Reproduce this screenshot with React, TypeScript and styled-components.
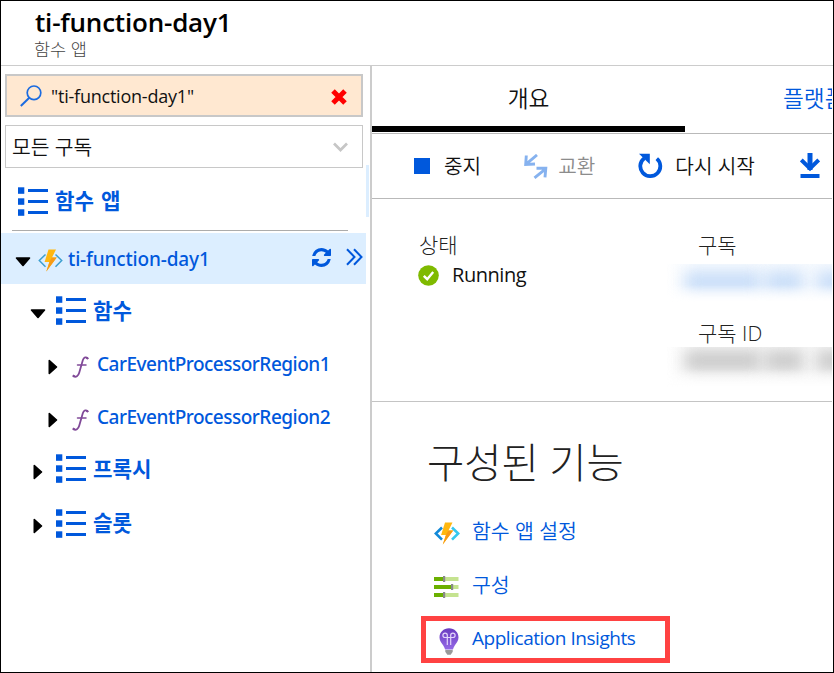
import React from 'react';
import styled, { createGlobalStyle, css } from 'styled-components';

const BLUE = '#0058dc';
const LINE = '#b9b9b9';

const GlobalStyle = createGlobalStyle`
  * { box-sizing: border-box; }
  body { margin: 0; background: #fff; }
`;

const Frame = styled.div`
  width: 834px;
  height: 673px;
  border: 1px solid #000;
  overflow: hidden;
  display: flex;
  flex-direction: column;
  font-family: 'Open Sans', 'Noto Sans CJK KR', sans-serif;
  color: #111;
  white-space: nowrap;
  line-height: 1;
`;

const Header = styled.header`
  flex: none;
  height: 65px;
  border-bottom: 1px solid #ccc;
  padding: 5px 0 0 34px;
`;

const Title = styled.h1`
  margin: 0;
  font-size: 26px;
  font-weight: 600;
  letter-spacing: -0.2px;
  line-height: 33px;
  color: #000;
`;

const Subtitle = styled.div`
  margin-left: -1px;
  font-size: 17.5px;
  font-weight: 300;
  line-height: 20px;
  color: #444;
`;

const Body = styled.div`
  flex: 1;
  min-height: 0;
  display: grid;
  grid-template-columns: 369px 462px;
`;

const Sidebar = styled.aside`
  padding-top: 8px;
  display: flex;
  flex-direction: column;
`;

const SearchBox = styled.div`
  height: 43px;
  width: 358px;
  margin-left: 4px;
  border: 2px solid #c8c8c8;
  background: #ffe8d1;
  display: flex;
  align-items: center;
  padding: 0 13px 0 13px;
`;

const SearchText = styled.span`
  flex: 1;
  margin-left: 9px;
  font-size: 18px;
  letter-spacing: -0.22px;
  line-height: 24px;
`;

const SelectBox = styled.div`
  height: 43px;
  width: 358px;
  margin: 8px 0 0 4px;
  border: 1px solid #c8c8c8;
  display: flex;
  align-items: center;
  justify-content: space-between;
  padding: 1px 14px 0 6px;
  font-size: 20.4px;
  font-weight: 350;
`;

const ListHeading = styled.div`
  height: 62px;
  width: 365px;
  display: flex;
  align-items: center;
  padding: 4px 0 0 17px;
  position: relative;
`;

const ScrollMark = styled.i`
  position: absolute;
  left: 365px;
  top: -3px;
  width: 3px;
  height: 52px;
  background: #dceeff;
`;

const Rule = styled.hr`
  margin: 0 0 2px 11px;
  width: 336px;
  height: 1px;
  border: 0;
  background: #acacac;
`;

const Row = styled.div<{ $indent: number; $h?: number; $active?: boolean }>`
  flex: none;
  height: ${(p) => p.$h ?? 53}px;
  width: 365px;
  padding-left: ${(p) => p.$indent}px;
  display: flex;
  align-items: center;
  ${(p) => p.$active && css`background: #dceeff;`}
`;

const KoLabel = styled.span`
  margin-left: 7px;
  font-size: 21.2px;
  font-weight: 700;
  word-spacing: 1.5px;
  line-height: 28px;
  color: ${BLUE};
`;

const EnLabel = styled.span<{ $gap: number; $tight?: boolean }>`
  margin-left: ${(p) => p.$gap}px;
  font-family: 'Noto Sans', sans-serif;
  font-size: 19px;
  font-weight: 500;
  letter-spacing: ${(p) => (p.$tight ? '-0.5px' : '-0.15px')};
  line-height: 26px;
  color: ${BLUE};
`;

const Caret = styled.svg`
  flex: none;
  margin-top: 6px;
`;

const IconSlot = styled.span<{ $left: number; $top?: number }>`
  flex: none;
  display: flex;
  margin: ${(p) => p.$top ?? 0}px 0 0 ${(p) => p.$left}px;
`;

const RowActions = styled.div`
  flex: 1;
  display: flex;
  justify-content: flex-end;
  align-items: center;
  gap: 15px;
  padding: 0 3px 3px 0;
`;

const Main = styled.main`
  border-left: 2px solid #ccc;
  display: flex;
  flex-direction: column;
  overflow: hidden;
`;

const Tabs = styled.nav`
  flex: none;
  height: 68px;
  border-bottom: 1px solid ${LINE};
  display: flex;
`;

const Tab = styled.div<{ $selected?: boolean }>`
  flex: none;
  width: 313px;
  height: 66px;
  display: flex;
  justify-content: center;
  align-items: center;
  font-size: 22.7px;
  font-weight: 350;
  ${(p) =>
    p.$selected
      ? css`border-bottom: 6px solid #000; padding-top: 7px;`
      : css`color: ${BLUE}; padding: 1px 0 0 98px; justify-content: flex-start;`}
`;

const Toolbar = styled.div`
  flex: none;
  height: 65px;
  border-bottom: 1px solid ${LINE};
  display: flex;
  align-items: center;
  padding-left: 42px;
`;

const Command = styled.div<{ $gap: number; $after: number; $off?: boolean }>`
  flex: none;
  display: flex;
  align-items: center;
  gap: ${(p) => p.$gap}px;
  margin-right: ${(p) => p.$after}px;
  font-size: 20.2px;
  font-weight: 350;
  line-height: 28px;
  color: ${(p) => (p.$off ? '#8c8c8c' : '#111')};
`;

const StopSquare = styled.i`
  width: 16px;
  height: 16px;
  background: ${BLUE};
`;

const Essentials = styled.section`
  flex: none;
  height: 203px;
  border-bottom: 1px solid #c4c4c4;
  display: grid;
  grid-template-columns: 279px 1fr;
  padding: 32px 0 0 46px;
`;

const FieldName = styled.div`
  height: 28px;
  line-height: 28px;
  padding-left: 1px;
  font-size: 21px;
  font-weight: 300;
  color: #222;
`;

const Status = styled.div`
  display: flex;
  align-items: center;
  gap: 13px;
  height: 32px;
  font-size: 20px;
  letter-spacing: -0.45px;
`;

const Redacted = styled.div<{ $tone: string; $tall?: boolean }>`
  width: 170px;
  height: ${(p) => (p.$tall ? 40 : 38)}px;
  margin: ${(p) => (p.$tall ? '0 0 0 -32px' : '5px 0 17px -32px')};
  overflow: hidden;
  display: flex;
  padding: ${(p) => (p.$tall ? '4px' : '8px')} 0 0 20px;
  background: linear-gradient(90deg, #fff, ${(p) => p.$tone}22 18%, ${(p) => p.$tone}22);
  mask-image: linear-gradient(#000 55%, transparent);
`;

const RedactedWord = styled.i<{ $w: number; $gap: number; $tone: string }>`
  flex: none;
  width: ${(p) => p.$w}px;
  height: 19px;
  margin-left: ${(p) => p.$gap}px;
  background: ${(p) => p.$tone};
  filter: blur(8px);
`;

const Features = styled.section`
  padding: 37px 0 0 49px;
`;

const FeaturesTitle = styled.h2`
  margin: 0 0 17px 6px;
  font-size: 40.5px;
  font-weight: 300;
  line-height: 48px;
  color: #222;
`;

const Feature = styled.div<{ $boxed?: boolean }>`
  width: 249px;
  height: ${(p) => (p.$boxed ? 47 : 54)}px;
  margin-top: ${(p) => (p.$boxed ? 4 : 0)}px;
  padding-left: ${(p) => (p.$boxed ? 13 : 13)}px;
  ${(p) => p.$boxed && css`border: 5px solid #ff4242;`}
  display: flex;
  align-items: center;
  color: ${BLUE};
`;

const FeatureIcon = styled.span<{ $w: number }>`
  flex: none;
  width: ${(p) => p.$w}px;
  padding-top: 4px;
  display: flex;
`;

const FeatureLabel = styled.span<{ $latin?: boolean }>`
  font-size: ${(p) => (p.$latin ? 19 : 20.5)}px;
  font-weight: ${(p) => (p.$latin ? 400 : 350)};
  letter-spacing: ${(p) => (p.$latin ? '-0.47px' : '0')};
  line-height: 28px;
  ${(p) => p.$latin && css`padding-bottom: 4px;`}
`;

const ListIcon = () => (
  <svg width="30" height="29" viewBox="0 0 30 29" fill={BLUE}>
    {[0, 11, 22].map((y) => (
      <g key={y}>
        <rect x="0" y={y + 0.3} width="6.3" height="6.5" />
        <rect x="10" y={y + 2} width="20" height="3" />
      </g>
    ))}
  </svg>
);

const CaretDown = () => (
  <Caret width="16" height="10" viewBox="0 0 16 10">
    <path d="M1.5 1h13L8 8.5z" stroke="#000" strokeWidth="1.6" strokeLinejoin="round" />
  </Caret>
);

const CaretRight = () => (
  <Caret width="10" height="16" viewBox="0 0 10 16">
    <path d="M1.3 1.5v13L8.5 8z" stroke="#000" strokeWidth="1.6" strokeLinejoin="round" />
  </Caret>
);

const FunctionAppIcon = ({ w = 25, left = '#3c9fd0', right = '#3c9fd0', sw = 1.5 }) => (
  <svg width={w} height="23" viewBox="0 0 25 23" fill="none">
    <path d="M7.5 5.5L1.3 11.5l6.2 6.2" stroke={left} strokeWidth={sw} />
    <path d="M17.5 5.500l6.200 6-6.200 6.200" stroke={right} strokeWidth={sw} />
    <path d="M10.500 .5h7.500l-4 8h4.700L8.300 22.500l3-9.500H6.600z" fill="#ffb70f" />
    <path d="M14 8.500h4.700L8.300 22.500l3.800-11z" fill="#f79a16" />
  </svg>
);

const FIcon = () => (
  <svg width="17" height="22" viewBox="0 0 17 22" fill="none" stroke="#804998" strokeLinecap="round">
    <path d="M15.600 2.300C14.200.7 11.800 1 10.800 4.200L7.200 16.800C6.300 20 4 21.600 1.500 20.300" strokeWidth="1.800" />
    <path d="M5.500 9h8.500" strokeWidth="1.500" />
    <circle cx="15.200" cy="2.300" r=".7" fill="#804998" />
    <circle cx="1.600" cy="19.900" r=".7" fill="#804998" />
  </svg>
);

const SearchIcon = () => (
  <svg width="22" height="22" viewBox="0 0 22 22" fill="none" stroke="#1b6be0" strokeWidth="1.700">
    <circle cx="14" cy="7.800" r="6.800" />
    <path d="M9.300 12.800L.8 21" strokeWidth="2" />
  </svg>
);

const ClearIcon = () => (
  <svg width="18" height="18" viewBox="0 0 18 18">
    <path d="M3 4l12 12M15 4L3 16" stroke="#f00" strokeWidth="5" />
  </svg>
);

const ChevronDown = () => (
  <svg width="15" height="11" viewBox="0 0 15 11">
    <path d="M1 1.500l6.500 6.500L14 1.500" fill="none" stroke="#c6c6c6" strokeWidth="2.700" />
  </svg>
);

const RefreshIcon = () => (
  <svg width="19" height="19" viewBox="0 0 1536 1536" fill={BLUE}>
    <path d="M1511 928q0 5-1 7-64 268-268 434.500T764 1536q-146 0-282.500-55T238 1324l-129 129q-19 19-45 19t-45-19-19-45V960q0-26 19-45t45-19h448q26 0 45 19t19 45-19 45l-137 137q71 66 161 102t187 36q134 0 250-65t186-179q11-17 53-117 8-23 30-23h192q13 0 22.500 9.500t9.500 22.500zm25-800v448q0 26-19 45t-45 19h-448q-26 0-45-19t-19-45 19-45l138-138Q969 256 768 256q-134 0-250 65T332 500q-11 17-53 117-8 23-30 23H50q-13 0-22.500-9.500T18 608v-7q65-268 270-434.500T768 0q146 0 284 55.500T1297 212l130-129q19-19 45-19t45 19 19 45z" />
  </svg>
);

const DoubleChevron = () => (
  <svg width="17" height="18" viewBox="0 0 17 18" fill="none" stroke={BLUE} strokeWidth="2">
    <path d="M1 1.200L8.500 9 1 16.800M8 1.200L15.500 9 8 16.800" />
  </svg>
);

const SwapIcon = () => (
  <svg width="24" height="25" viewBox="0 0 24 25" fill="none" stroke="#86b2ef" strokeWidth="2.900">
    <path d="M13 1L3 9.300M2.300 1.500L1.700 10.500l9.300-.5" />
    <path d="M10.500 23.800l10.500-8.500M12.500 14.300h9.300l-.8 9" />
  </svg>
);

const RestartIcon = () => (
  <svg width="25" height="26" viewBox="0 0 25 26">
    <path d="M18.800 5.600A10 10 0 1 1 6.300 5.200" fill="none" stroke={BLUE} strokeWidth="3.800" />
    <path d="M1 .8h10.800v10.400z" fill={BLUE} />
  </svg>
);

const DownloadIcon = () => (
  <svg width="20" height="26" viewBox="0 0 20 26" fill="none" stroke={BLUE}>
    <path d="M10 0v17" strokeWidth="5" />
    <path d="M1.300 7L10 15.500 18.700 7" strokeWidth="4" />
    <path d="M.5 23h19" strokeWidth="4" />
  </svg>
);

const CheckIcon = () => (
  <svg width="21" height="21" viewBox="0 0 21 21">
    <circle cx="10.500" cy="10.500" r="10.300" fill="#7fba00" />
    <path d="M5.800 10.800l3.400 3.400 6-7.200" fill="none" stroke="#fff" strokeWidth="2.400" />
  </svg>
);

const SlidersIcon = () => (
  <svg width="25" height="22" viewBox="0 0 25 22">
    {[[0, 9], [8, 17], [16, 9]].map(([y, x]) => (
      <g key={y}>
        <rect y={y + 1} width="24.500" height="4" fill="#c5e390" />
        <rect y={y + 1} width={x} height="4" fill="#6bb000" />
        <rect x={x} y={y} width="2.200" height="6" fill="#8a8a8a" />
      </g>
    ))}
  </svg>
);

const BulbIcon = () => (
  <svg width="20" height="27" viewBox="0 0 20 27">
    <defs>
      <linearGradient id="bulb" x1="0" y1="0" x2="0" y2="1">
        <stop offset="0" stopColor="#6b3cc0" />
        <stop offset="1" stopColor="#9468e6" />
      </linearGradient>
    </defs>
    <path d="M10 .3C4.500.3.5 4.300.5 9.500c0 3.500 2 5.500 3.600 7.700 1 1.500 1.600 2.800 2 4.300h7.800c.4-1.500 1-2.800 2-4.300 1.600-2.200 3.600-4.200 3.600-7.700C19.500 4.300 15.500.3 10 .3z" fill="url(#bulb)" />
    <path d="M8.300 17V9M11.700 17V9M8.300 9.500H6a2.200 2.200 0 1 1 2.300-2.200zM11.700 9.500H14a2.200 2.200 0 1 0-2.300-2.200zM8.300 9.500h3.400" fill="none" stroke="#e3d5fa" strokeWidth="1.200" />
    <path d="M6.300 22h7.400v1.800l-2 2.900H8.300l-2-2.900z" fill="#999" />
  </svg>
);

const RedactedLine = ({ tone, tall }: { tone: string; tall?: boolean }) => (
  <Redacted $tone={tone} $tall={tall}>
    <RedactedWord $w={76} $gap={0} $tone={tone} />
    <RedactedWord $w={38} $gap={4} $tone={tone} />
    <RedactedWord $w={30} $gap={14} $tone={tone} />
  </Redacted>
);

export default function App() {
  return (
    <>
      <GlobalStyle />
      <Frame>
        <Header>
          <Title>ti-function-day1</Title>
          <Subtitle>함수 앱</Subtitle>
        </Header>
        <Body>
          <Sidebar>
            <SearchBox>
              <SearchIcon />
              <SearchText>"ti-function-day1"</SearchText>
              <ClearIcon />
            </SearchBox>
            <SelectBox>
              모든 구독
              <ChevronDown />
            </SelectBox>
            <ListHeading>
              <ListIcon />
              <KoLabel>함수 앱</KoLabel>
              <ScrollMark />
            </ListHeading>
            <Rule />
            <Row $indent={14} $h={51} $active>
              <CaretDown />
              <IconSlot $left={7} $top={3}><FunctionAppIcon /></IconSlot>
              <EnLabel $gap={5}>ti-function-day1</EnLabel>
              <RowActions>
                <RefreshIcon />
                <DoubleChevron />
              </RowActions>
            </Row>
            <Row $indent={29}>
              <CaretDown />
              <IconSlot $left={10}><ListIcon /></IconSlot>
              <KoLabel>함수</KoLabel>
            </Row>
            <Row $indent={47}>
              <CaretRight />
              <IconSlot $left={14} $top={6}><FIcon /></IconSlot>
              <EnLabel $gap={8} $tight>CarEventProcessorRegion1</EnLabel>
            </Row>
            <Row $indent={47}>
              <CaretRight />
              <IconSlot $left={14} $top={6}><FIcon /></IconSlot>
              <EnLabel $gap={8} $tight>CarEventProcessorRegion2</EnLabel>
            </Row>
            <Row $indent={32} $h={51}>
              <CaretRight />
              <IconSlot $left={13}><ListIcon /></IconSlot>
              <KoLabel>프록시</KoLabel>
            </Row>
            <Row $indent={32} $h={58}>
              <CaretRight />
              <IconSlot $left={13}><ListIcon /></IconSlot>
              <KoLabel>슬롯</KoLabel>
            </Row>
          </Sidebar>
          <Main>
            <Tabs>
              <Tab $selected>개요</Tab>
              <Tab>플랫폼 기능</Tab>
            </Tabs>
            <Toolbar>
              <Command $gap={14} $after={43}><StopSquare />중지</Command>
              <Command $gap={10} $after={43} $off><SwapIcon />교환</Command>
              <Command $gap={12} $after={45}><RestartIcon />다시 시작</Command>
              <Command $gap={11} $after={0}><DownloadIcon />배포</Command>
            </Toolbar>
            <Essentials>
              <div>
                <FieldName>상태</FieldName>
                <Status><CheckIcon />Running</Status>
              </div>
              <div>
                <FieldName>구독</FieldName>
                <RedactedLine tone="#c4dbf8" />
                <FieldName>구독 ID</FieldName>
                <RedactedLine tone="#c6c6c6" tall />
              </div>
            </Essentials>
            <Features>
              <FeaturesTitle>구성된 기능</FeaturesTitle>
              <Feature>
                <FeatureIcon $w={38}>
                  <FunctionAppIcon w={26} left="#1289d8" right="#35c8ef" sw={2.6} />
                </FeatureIcon>
                <FeatureLabel>함수 앱 설정</FeatureLabel>
              </Feature>
              <Feature>
                <FeatureIcon $w={38}><SlidersIcon /></FeatureIcon>
                <FeatureLabel>구성</FeatureLabel>
              </Feature>
              <Feature $boxed>
                <FeatureIcon $w={33}><BulbIcon /></FeatureIcon>
                <FeatureLabel $latin>Application Insights</FeatureLabel>
              </Feature>
            </Features>
          </Main>
        </Body>
      </Frame>
    </>
  );
}
